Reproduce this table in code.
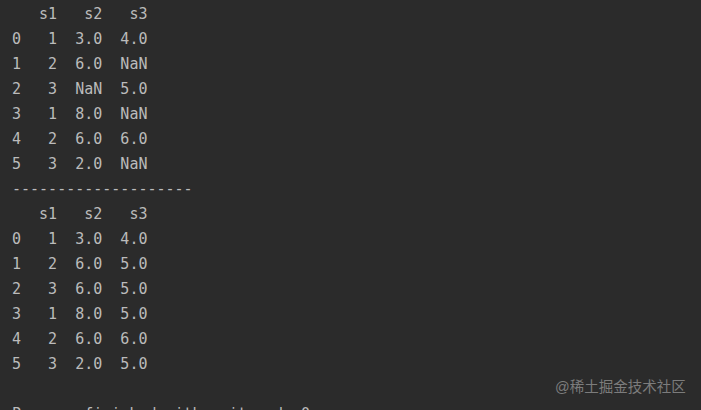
import React from "react";

const lines = [
  "   s1   s2   s3",
  "0   1  3.0  4.0",
  "1   2  6.0  NaN",
  "2   3  NaN  5.0",
  "3   1  8.0  NaN",
  "4   2  6.0  6.0",
  "5   3  2.0  NaN",
  "--------------------",
  "   s1   s2   s3",
  "0   1  3.0  4.0",
  "1   2  6.0  5.0",
  "2   3  6.0  5.0",
  "3   1  8.0  5.0",
  "4   2  6.0  6.0",
  "5   3  2.0  5.0",
  "",
  "Process finished with exit code 0",
];

export default function App() {
  return (
    <div className="relative w-[701px] h-[410px] overflow-hidden bg-[#2b2b2b]">
      <div
        className="pl-[12px] pt-[2px] text-[15px] leading-[25px] text-[#bbbbbb] whitespace-pre"
        style={{ fontFamily: '"DejaVu Sans Mono", "Liberation Mono", monospace' }}
      >
        {lines.map((l, i) => (
          <div key={i} className="h-[25px]">
            {l}
          </div>
        ))}
      </div>
      <div
        className="absolute left-[555px] top-[377px] text-[14.5px] leading-[20px] text-[#7c7c7c]"
        style={{ fontFamily: '"Liberation Sans", "Noto Sans CJK SC", sans-serif' }}
      >
        @稀土掘金技术社区
      </div>
    </div>
  );
}
